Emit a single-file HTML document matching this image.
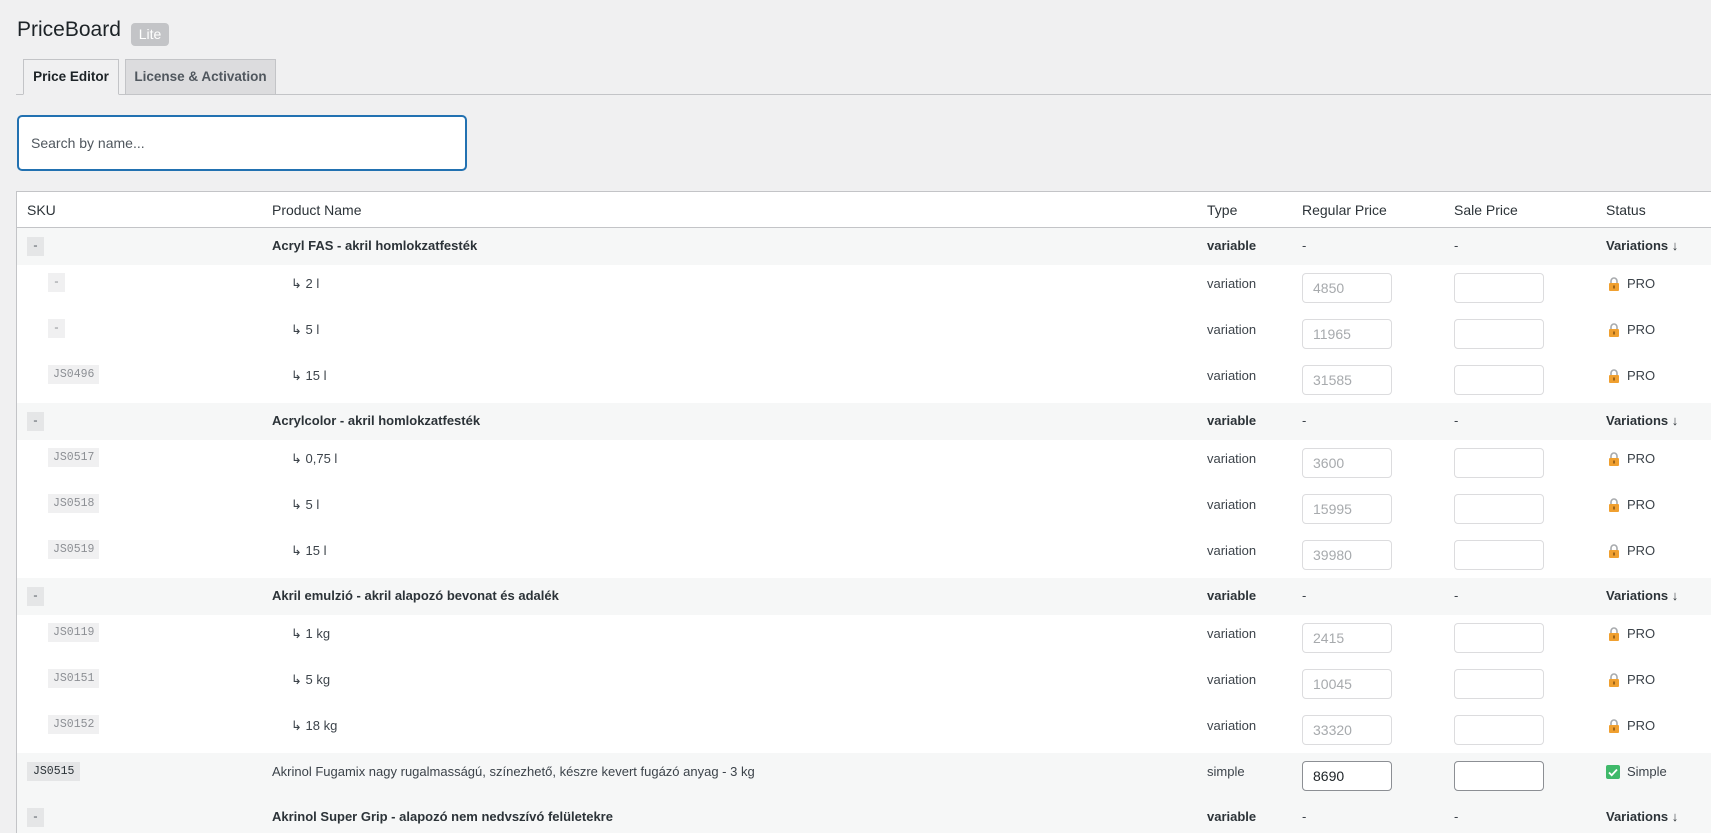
<!DOCTYPE html>
<html><head><meta charset="utf-8"><style>
*{box-sizing:border-box;margin:0;padding:0}
html,body{width:1711px;height:833px;overflow:hidden}
body{background:#f0f0f1;font-family:"Liberation Sans",sans-serif;font-size:13px;color:#3c434a;position:relative}
.abs{position:absolute}
h1{position:absolute;left:17px;top:18px;font-size:21px;font-weight:400;color:#1d2327;white-space:nowrap}
.lite{position:absolute;left:131px;top:23px;width:38px;height:23px;background:#c3c4c7;color:#fff;border-radius:4px;font-size:14px;line-height:23px;text-align:center}
.tabline{position:absolute;left:16px;right:0;top:94px;height:1px;background:#c3c4c7}
.tab{position:absolute;top:59px;height:36px;border:1px solid #c3c4c7;font-size:13.5px;font-weight:bold;line-height:34px;text-align:center;white-space:nowrap}
.search{position:absolute;left:17px;top:115px;width:450px;height:56px;background:#fff;border:2px solid #2271b1;border-radius:5px;padding-left:12px;line-height:52px;font-size:14px;color:#50575e}
.table{position:absolute;left:16px;top:191px;right:-2px;height:642px;background:#fff;border:1px solid #c3c4c7;border-bottom:none}
.row{position:absolute;left:0;right:0}
.hd{top:0;height:36px;border-bottom:1px solid #c3c4c7}
.hd span{position:absolute;top:10px;font-size:14px;color:#2c3338}
.v{background:#f6f7f7;height:37px}
.c{position:absolute;white-space:nowrap}
.v .c{top:10px}
.v b{font-weight:bold;color:#2c3338}
.vr{height:46px;background:#fff}
.vr .c{top:11px}
.badge{position:absolute;background:#f0f0f1;font-family:"Liberation Mono",monospace;font-size:11.5px;color:#8c8f94;height:19px;line-height:19px;padding:0 5px}
.inp{position:absolute;width:90px;height:30px;border:1px solid #dcdcde;border-radius:4px;background:#fff;font-size:14px;color:#a7aaad;padding-left:10px;line-height:28px}
.s .inp{border-color:#8c8f94;color:#1d2327}
</style></head><body>
<h1>PriceBoard</h1><div class="lite">Lite</div>
<div class="tabline"></div>
<div class="tab" style="left:23px;width:96px;background:#f0f0f1;border-bottom-color:#f0f0f1;color:#1d2327">Price Editor</div>
<div class="tab" style="left:125px;width:151px;background:#dcdcde;color:#50575e">License &amp; Activation</div>
<div class="search">Search by name...</div>
<div class="table">
<div class="row hd"><span style="left:10px">SKU</span><span style="left:255px">Product Name</span><span style="left:1190px">Type</span><span style="left:1285px">Regular Price</span><span style="left:1437px">Sale Price</span><span style="left:1589px">Status</span></div>
</div>
<svg width="0" height="0" style="position:absolute"><defs>
<symbol id="lock" viewBox="0 0 12 14"><path d="M3 6V4a3 3 0 0 1 6 0v2" fill="none" stroke="#a7aaad" stroke-width="1.6"/><rect x="1" y="6" width="10" height="8" rx="1" fill="#f0a030"/><rect x="5.3" y="8.5" width="1.4" height="3" fill="#7a4a10"/></symbol>
<symbol id="chk" viewBox="0 0 14 14"><rect width="14" height="14" rx="2" fill="#3fb96a"/><path d="M3 7.5l2.7 2.7L11 4.5" fill="none" stroke="#fff" stroke-width="1.8"/></symbol>
</defs></svg>
<div class="abs" style="left:17px;top:228px;width:1694px;height:605px;overflow:hidden">
<div class="row v" style="top:0"><span class="badge" style="left:10px;top:9px;color:#50575e;background:#e5e6e7">-</span><b class="c" style="left:255px">Acryl FAS - akril homlokzatfesték</b><b class="c" style="left:1190px">variable</b><span class="c" style="left:1285px">-</span><span class="c" style="left:1437px">-</span><b class="c" style="left:1589px">Variations ↓</b></div>
<div class="row vr" style="top:37px"><span class="badge" style="left:31px;top:8px">-</span><span class="c" style="left:274px">↳ 2 l</span><span class="c" style="left:1190px">variation</span><div class="inp" style="left:1285px;top:8px">4850</div><div class="inp" style="left:1437px;top:8px"></div><svg class="c" style="left:1591px;top:12px" width="12" height="14"><use href="#lock"/></svg><span class="c" style="left:1610px">PRO</span></div>
<div class="row vr" style="top:83px"><span class="badge" style="left:31px;top:8px">-</span><span class="c" style="left:274px">↳ 5 l</span><span class="c" style="left:1190px">variation</span><div class="inp" style="left:1285px;top:8px">11965</div><div class="inp" style="left:1437px;top:8px"></div><svg class="c" style="left:1591px;top:12px" width="12" height="14"><use href="#lock"/></svg><span class="c" style="left:1610px">PRO</span></div>
<div class="row vr" style="top:129px"><span class="badge" style="left:31px;top:8px">JS0496</span><span class="c" style="left:274px">↳ 15 l</span><span class="c" style="left:1190px">variation</span><div class="inp" style="left:1285px;top:8px">31585</div><div class="inp" style="left:1437px;top:8px"></div><svg class="c" style="left:1591px;top:12px" width="12" height="14"><use href="#lock"/></svg><span class="c" style="left:1610px">PRO</span></div>
<div class="row v" style="top:175px"><span class="badge" style="left:10px;top:9px;color:#50575e;background:#e5e6e7">-</span><b class="c" style="left:255px">Acrylcolor - akril homlokzatfesték</b><b class="c" style="left:1190px">variable</b><span class="c" style="left:1285px">-</span><span class="c" style="left:1437px">-</span><b class="c" style="left:1589px">Variations ↓</b></div>
<div class="row vr" style="top:212px"><span class="badge" style="left:31px;top:8px">JS0517</span><span class="c" style="left:274px">↳ 0,75 l</span><span class="c" style="left:1190px">variation</span><div class="inp" style="left:1285px;top:8px">3600</div><div class="inp" style="left:1437px;top:8px"></div><svg class="c" style="left:1591px;top:12px" width="12" height="14"><use href="#lock"/></svg><span class="c" style="left:1610px">PRO</span></div>
<div class="row vr" style="top:258px"><span class="badge" style="left:31px;top:8px">JS0518</span><span class="c" style="left:274px">↳ 5 l</span><span class="c" style="left:1190px">variation</span><div class="inp" style="left:1285px;top:8px">15995</div><div class="inp" style="left:1437px;top:8px"></div><svg class="c" style="left:1591px;top:12px" width="12" height="14"><use href="#lock"/></svg><span class="c" style="left:1610px">PRO</span></div>
<div class="row vr" style="top:304px"><span class="badge" style="left:31px;top:8px">JS0519</span><span class="c" style="left:274px">↳ 15 l</span><span class="c" style="left:1190px">variation</span><div class="inp" style="left:1285px;top:8px">39980</div><div class="inp" style="left:1437px;top:8px"></div><svg class="c" style="left:1591px;top:12px" width="12" height="14"><use href="#lock"/></svg><span class="c" style="left:1610px">PRO</span></div>
<div class="row v" style="top:350px"><span class="badge" style="left:10px;top:9px;color:#50575e;background:#e5e6e7">-</span><b class="c" style="left:255px">Akril emulzió - akril alapozó bevonat és adalék</b><b class="c" style="left:1190px">variable</b><span class="c" style="left:1285px">-</span><span class="c" style="left:1437px">-</span><b class="c" style="left:1589px">Variations ↓</b></div>
<div class="row vr" style="top:387px"><span class="badge" style="left:31px;top:8px">JS0119</span><span class="c" style="left:274px">↳ 1 kg</span><span class="c" style="left:1190px">variation</span><div class="inp" style="left:1285px;top:8px">2415</div><div class="inp" style="left:1437px;top:8px"></div><svg class="c" style="left:1591px;top:12px" width="12" height="14"><use href="#lock"/></svg><span class="c" style="left:1610px">PRO</span></div>
<div class="row vr" style="top:433px"><span class="badge" style="left:31px;top:8px">JS0151</span><span class="c" style="left:274px">↳ 5 kg</span><span class="c" style="left:1190px">variation</span><div class="inp" style="left:1285px;top:8px">10045</div><div class="inp" style="left:1437px;top:8px"></div><svg class="c" style="left:1591px;top:12px" width="12" height="14"><use href="#lock"/></svg><span class="c" style="left:1610px">PRO</span></div>
<div class="row vr" style="top:479px"><span class="badge" style="left:31px;top:8px">JS0152</span><span class="c" style="left:274px">↳ 18 kg</span><span class="c" style="left:1190px">variation</span><div class="inp" style="left:1285px;top:8px">33320</div><div class="inp" style="left:1437px;top:8px"></div><svg class="c" style="left:1591px;top:12px" width="12" height="14"><use href="#lock"/></svg><span class="c" style="left:1610px">PRO</span></div>
<div class="row vr s" style="top:525px;background:#f6f7f7"><span class="badge" style="left:10px;top:9px;color:#2c3338;background:#e5e6e7;padding:0 6px">JS0515</span><span class="c" style="left:255px">Akrinol Fugamix nagy rugalmasságú, színezhető, készre kevert fugázó anyag - 3 kg</span><span class="c" style="left:1190px">simple</span><div class="inp" style="left:1285px;top:8px">8690</div><div class="inp" style="left:1437px;top:8px"></div><svg class="c" style="left:1589px;top:12px" width="14" height="14"><use href="#chk"/></svg><span class="c" style="left:1610px">Simple</span></div>
<div class="row v" style="top:571px;height:40px"><span class="badge" style="left:10px;top:9px;color:#50575e;background:#e5e6e7">-</span><b class="c" style="left:255px">Akrinol Super Grip - alapozó nem nedvszívó felületekre</b><b class="c" style="left:1190px">variable</b><span class="c" style="left:1285px">-</span><span class="c" style="left:1437px">-</span><b class="c" style="left:1589px">Variations ↓</b></div>
</div>
</body></html>
